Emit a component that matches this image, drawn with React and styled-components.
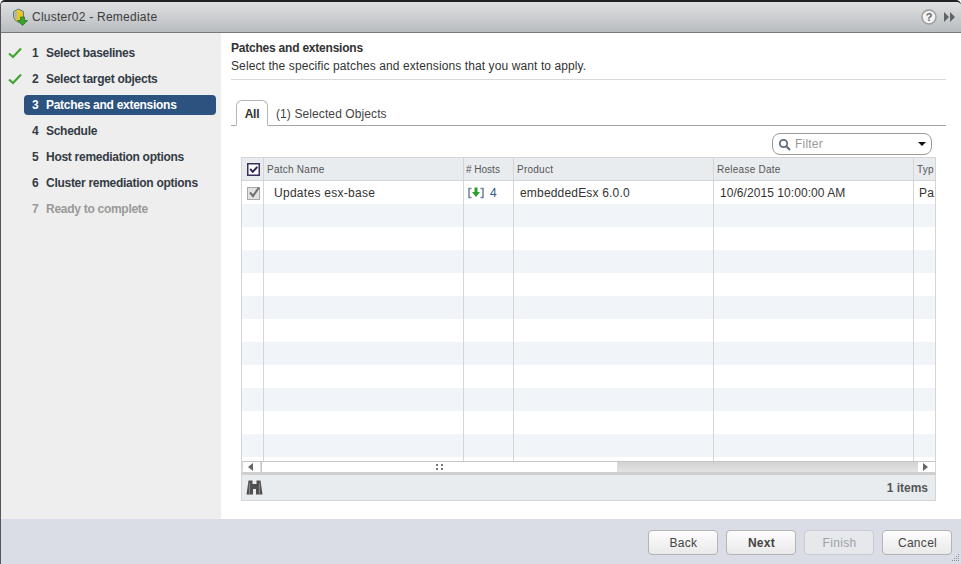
import React from "react";
import styled, { createGlobalStyle } from "styled-components";

const Global = createGlobalStyle`
  html, body { margin: 0; padding: 0; background: #fff; }
  * { box-sizing: border-box; }
  body { font-family: "Liberation Sans", Arial, sans-serif; font-size: 12px; color: #333; }
`;

const Dialog = styled.div`
  width: 961px; height: 564px; display: flex; flex-direction: column; overflow: hidden;
  background: #dadde5; border-top: 2px solid #222; border-left: 1px solid #555; border-top-left-radius: 5px; border-top-right-radius: 5px;
`;
const TitleBar = styled.div`
  height: 31px; flex: none; display: flex; align-items: center; padding: 0 5px 0 11px;
  background: linear-gradient(#dfe1e2, #b9bcbf); border-bottom: 1px solid #77797b;
`;
const TitleText = styled.div`
  margin-left: 3px; font-size: 12px; letter-spacing: 0.25px; color: #3c3c3c; flex: 1;
`;
const Body = styled.div` flex: 1; display: flex; min-height: 0; `;
const Sidebar = styled.div`
  width: 220px; flex: none; background: #eeeeee; padding: 10px 5px 0 7px; display: flex; flex-direction: column; gap: 6px;
`;
const Step = styled.div`
  height: 20px; display: flex; align-items: center;
  font-weight: bold; font-size: 12px; letter-spacing: -0.28px;
  color: ${(p) => (p.$muted ? "#999" : "#333b45")};
`;
const CheckSlot = styled.div` width: 16px; flex: none; display: flex; align-items: center; `;
const StepPill = styled.div`
  flex: 1; height: 20px; display: flex; align-items: center; padding-left: 8px; border-radius: 4px;
  background: ${(p) => (p.$active ? "#2c5380" : "transparent")};
  color: ${(p) => (p.$active ? "#fff" : "inherit")};
`;
const StepNum = styled.span` width: 14px; flex: none; `;
const Main = styled.div` flex: 1; background: #fff; padding: 8px 14px 18px 10px; min-width: 0; display: flex; flex-direction: column; `;
const Heading = styled.div` font-weight: bold; font-size: 12px; letter-spacing: -0.22px; color: #333; line-height: 14px; `;
const SubHeading = styled.div` font-size: 12px; letter-spacing: 0.1px; color: #333; line-height: 14px; margin-top: 4px; `;
const Rule = styled.div` height: 1px; background: #d8d8d8; margin: 6px 1px 0 0; `;
const Tabs = styled.div`
  display: flex; align-items: flex-end; height: 26px; margin: 20px 1px 0 0; border-bottom: 1px solid #a5a5a5;
`;
const ActiveTab = styled.div`
  height: 26px; width: 32px; margin-left: 5px; margin-bottom: -1px; padding-top: 2px; border: 1px solid #b5b5b5; border-bottom: 1px solid #fff;
  border-radius: 6px 6px 0 0; background: #fff; display: flex; align-items: center; justify-content: center; font-weight: bold; letter-spacing: -0.2px; color: #333;
`;
const Tab = styled.div` height: 25px; padding-top: 2px; display: flex; align-items: center; margin-left: 8px; letter-spacing: 0.1px; color: #444; `;
const FilterRow = styled.div` display: flex; justify-content: flex-end; padding: 7px 15px 0 0; `;
const Filter = styled.div`
  width: 160px; height: 22px; border: 1px solid #9a9a9a; border-radius: 8px; display: flex; align-items: center; padding: 0 5px;
  color: #999; letter-spacing: 0.2px; gap: 4px;
`;
const FilterLabel = styled.span` flex: 1; `;
const Caret = styled.span`
  width: 0; height: 0; border-left: 4px solid transparent; border-right: 4px solid transparent; border-top: 4px solid #111;
`;
const Grid = styled.div`
  width: 695px; margin: 2px 0 0 10px; border: 1px solid #d5d5d5; border-top: 0; display: flex; flex-direction: column; overflow: hidden;
`;
const Head = styled.div`
  height: 24px; display: flex; background: #e9ecef; border-top: 1px solid #d5d5d5; border-bottom: 1px solid #d5d5d5;
`;
const HeadCell = styled.div`
  width: ${(p) => p.$w}px; flex: none; display: flex; align-items: center; padding: 1px 0 0 ${(p) => p.$pad ?? 3}px; font-size: 10px;
  letter-spacing: ${(p) => p.$ls ?? 0.25}px; color: #555;
  border-right: 1px solid #d5d5d5; white-space: nowrap; overflow: hidden;
  &:last-child { border-right: 0; }
`;
const RowsWrap = styled.div` height: 281px; display: flex; flex-direction: column; overflow: hidden; `;
const Row = styled.div`
  height: 23px; flex: none; display: flex; background: ${(p) => (p.$alt ? "#f1f5fa" : "#fff")};
`;
const Filler = styled(Row)` height: 5px; `;
const Cell = styled.div`
  width: ${(p) => p.$w}px; flex: none; display: flex; align-items: center; padding: 1px 0 0 ${(p) => p.$pad ?? 6}px; font-size: 12px;
  letter-spacing: ${(p) => p.$ls ?? 0.2}px; color: #333;
  border-right: 1px solid #d5d5d5; white-space: nowrap; overflow: hidden;
  &:last-child { border-right: 0; }
`;
const HostLink = styled.span` color: #2c5a8f; margin-left: 6px; `;
const ScrollBar = styled.div`
  height: 14px; display: flex; background: linear-gradient(#d2d2d2, #e3e3e3); border-top: 1px solid #c5c5c5; border-bottom: 3px solid #cfcfcf; padding-left: 1px;
`;
const ScrollBtn = styled.div`
  width: 17px; flex: none; background: #fff; display: flex; align-items: center; justify-content: center;
  padding: ${(p) => (p.$end ? "0 2px 0 0" : "0 3px 0 0")};
`;
const Thumb = styled.div`
  width: 356px; flex: none; background: #fff; margin-left: 1px; border-left: 1px solid #c5c5c5; display: flex; align-items: center; justify-content: center;
`;
const Track = styled.div` flex: 1; `;
const Arrow = styled.span`
  width: 0; height: 0; border-top: 4px solid transparent; border-bottom: 4px solid transparent;
  ${(p) => (p.$left ? "border-right: 5px solid #666;" : "border-left: 5px solid #666;")}
`;
const GripDots = styled.span`
  display: grid; grid-template-columns: 2px 2px; gap: 2px 3px;
  & i { width: 2px; height: 2px; background: #777; display: block; }
`;
const GridFooter = styled.div`
  height: 25px; background: #e9ecef; display: flex; align-items: center; justify-content: space-between; padding: 0 7px 0 4px;
  font-weight: bold; color: #555;
`;
const Footer = styled.div`
  height: 45px; flex: none; background: #dadde5; display: flex; align-items: flex-start; justify-content: flex-end; gap: 8px; padding: 11px 9px 0 0; position: relative;
`;
const Button = styled.div`
  width: 70px; height: 25px; padding-left: 1px; border: 1px solid ${(p) => (p.$disabled ? "#c8cbd0" : "#b4b4b4")}; border-radius: 4px; display: flex; align-items: center; justify-content: center;
  font-size: 12px; letter-spacing: 0.3px; font-weight: ${(p) => (p.$primary ? "bold" : "normal")};
  color: ${(p) => (p.$disabled ? "#9da3a8" : "#444")};
  background: ${(p) => (p.$disabled ? "#e6e8eb" : "linear-gradient(#fdfdfd, #e9e9e9)")};
`;
const Resize = styled.svg` position: absolute; right: 1px; bottom: 1px; `;

const CheckMark = () => (
  <svg width="14" height="12" viewBox="0 0 14 12"><path d="M1 6.5 L5 10 L13 1.5" fill="none" stroke="#43a52f" strokeWidth="2.2" /></svg>
);
const AppIcon = () => (
  <svg width="17" height="18" viewBox="0 0 17 18">
    <path d="M1.5 3.5 L6.5 1 L11.5 3.5 L11.5 9 Q11 12 6.5 14.5 Q2 12 1.5 9 Z" fill="#e9c81c" stroke="#5c7a98" />
    <path d="M2.5 4.5 L5 3 V11.5 L2.5 9 Z" fill="#9db7d2" />
    <path d="M8.5 9 H12.5 V12.5 H15.5 L10.5 17.5 L5.5 12.5 H8.5 Z" fill="#3aa32d" stroke="#1f6d1b" strokeWidth="0.7" />
  </svg>
);
const HelpIcon = () => (
  <svg width="16" height="16" viewBox="0 0 16 16">
    <circle cx="8" cy="8" r="7" fill="#f2f2f2" stroke="#9c9ea0" strokeWidth="1.5" />
    <text x="8" y="12" textAnchor="middle" fontSize="11" fontWeight="bold" fontFamily="Liberation Sans" fill="#666">?</text>
  </svg>
);
const Expand = () => (
  <svg width="12" height="10" viewBox="0 0 12 10" style={{ marginLeft: 7 }}>
    <path d="M0 0 L5 5 L0 10 Z M6 0 L11 5 L6 10 Z" fill="#5f6266" />
  </svg>
);
const Search = () => (
  <svg width="13" height="13" viewBox="0 0 13 13">
    <circle cx="5.5" cy="5.5" r="3.7" fill="none" stroke="#5f6e7e" strokeWidth="1.8" />
    <path d="M8 8 L12 12" stroke="#5f6e7e" strokeWidth="2.2" />
  </svg>
);
const HeadCheck = () => (
  <svg width="13" height="13" viewBox="0 0 13 13">
    <rect x=".75" y=".75" width="11.5" height="11.5" fill="#fbfbfb" stroke="#3a3060" strokeWidth="1.5" />
    <path d="M3.2 6 L5.8 8.8 L10.3 3.8" fill="none" stroke="#2f2550" strokeWidth="1.9" />
  </svg>
);
const RowCheck = () => (
  <svg width="14" height="14" viewBox="0 0 14 14">
    <rect x=".5" y="1.5" width="12" height="12" fill="#e2e2e2" stroke="#a9a9a9" />
    <path d="M3 6.5 L6 10 L12 1.5" fill="none" stroke="#6e6e6e" strokeWidth="2" />
  </svg>
);
const HostIcon = () => (
  <svg width="16" height="12" viewBox="0 0 16 12">
    <path d="M3.5 1.5 H1 V10.5 H3.5 M12.5 1.5 H15 V10.5 H12.5" fill="none" stroke="#6f8296" strokeWidth="1.5" />
    <path d="M6.5 0.5 H9.5 V5 H12 L8 10 L4 5 H6.5 Z" fill="#2f9e2a" />
  </svg>
);
const Binoculars = () => (
  <svg width="17" height="15" viewBox="0 0 17 15">
    <path d="M2.5 0.5 H6.5 V4 H10.5 V0.5 H14.5 L16.5 14.5 H10 V9 H7 V14.5 H0.5 Z" fill="#4f4f4f" />
    <path d="M3.5 3 V14 M13.5 3 V14" stroke="#858585" strokeWidth="1.2" />
  </svg>
);

const steps = [
  { n: 1, t: "Select baselines", done: true },
  { n: 2, t: "Select target objects", done: true },
  { n: 3, t: "Patches and extensions", active: true },
  { n: 4, t: "Schedule" },
  { n: 5, t: "Host remediation options" },
  { n: 6, t: "Cluster remediation options" },
  { n: 7, t: "Ready to complete", muted: true },
];
const W = [22, 200, 50, 200, 200, 21];
const blanks = Array.from({ length: 11 }, (_, i) => i);

const BlankCells = () => W.map((w, i) => <Cell key={i} $w={w} />);

export default function App() {
  return (
    <>
      <Global />
      <Dialog>
        <TitleBar>
          <AppIcon />
          <TitleText>Cluster02 - Remediate</TitleText>
          <HelpIcon />
          <Expand />
        </TitleBar>
        <Body>
          <Sidebar>
            {steps.map((s) => (
              <Step key={s.n} $muted={s.muted}>
                <CheckSlot>{s.done && <CheckMark />}</CheckSlot>
                <StepPill $active={s.active}>
                  <StepNum>{s.n}</StepNum>
                  {s.t}
                </StepPill>
              </Step>
            ))}
          </Sidebar>
          <Main>
            <Heading>Patches and extensions</Heading>
            <SubHeading>Select the specific patches and extensions that you want to apply.</SubHeading>
            <Rule />
            <Tabs>
              <ActiveTab>All</ActiveTab>
              <Tab>(1) Selected Objects</Tab>
            </Tabs>
            <FilterRow>
              <Filter>
                <Search />
                <FilterLabel>Filter</FilterLabel>
                <Caret />
              </Filter>
            </FilterRow>
            <Grid>
              <Head>
                <HeadCell $w={W[0]} $pad={5}><HeadCheck /></HeadCell>
                <HeadCell $w={W[1]}>Patch Name</HeadCell>
                <HeadCell $w={W[2]} $pad={2} $ls={0}># Hosts</HeadCell>
                <HeadCell $w={W[3]}>Product</HeadCell>
                <HeadCell $w={W[4]}>Release Date</HeadCell>
                <HeadCell $w={W[5]}>Typ</HeadCell>
              </Head>
              <RowsWrap>
                <Row>
                  <Cell $w={W[0]} $pad={5}><RowCheck /></Cell>
                  <Cell $w={W[1]} $pad={10} $ls={0.28}>Updates esx-base</Cell>
                  <Cell $w={W[2]} $pad={4}><HostIcon /><HostLink>4</HostLink></Cell>
                  <Cell $w={W[3]} $ls={0.18}>embeddedEsx 6.0.0</Cell>
                  <Cell $w={W[4]} $ls={0.06}>10/6/2015 10:00:00 AM</Cell>
                  <Cell $w={W[5]} $pad={5}>Pa</Cell>
                </Row>
                {blanks.map((i) => (
                  <Row key={i} $alt={i % 2 === 0}><BlankCells /></Row>
                ))}
                <Filler><BlankCells /></Filler>
              </RowsWrap>
              <ScrollBar>
                <ScrollBtn><Arrow $left /></ScrollBtn>
                <Thumb>
                  <GripDots><i /><i /><i /><i /></GripDots>
                </Thumb>
                <Track />
                <ScrollBtn $end><Arrow /></ScrollBtn>
              </ScrollBar>
              <GridFooter>
                <Binoculars />
                <span>1 items</span>
              </GridFooter>
            </Grid>
          </Main>
        </Body>
        <Footer>
          <Button>Back</Button>
          <Button $primary>Next</Button>
          <Button $disabled>Finish</Button>
          <Button>Cancel</Button>
          <Resize width="10" height="10" viewBox="0 0 10 10">
            <path d="M8 1h1v1H8zM6 3h1v1H6zM8 3h1v1H8zM4 5h1v1H4zM6 5h1v1H6zM8 5h1v1H8zM2 7h1v1H2zM4 7h1v1H4zM6 7h1v1H6zM8 7h1v1H8z" fill="#8a8f96" />
          </Resize>
        </Footer>
      </Dialog>
    </>
  );
}
